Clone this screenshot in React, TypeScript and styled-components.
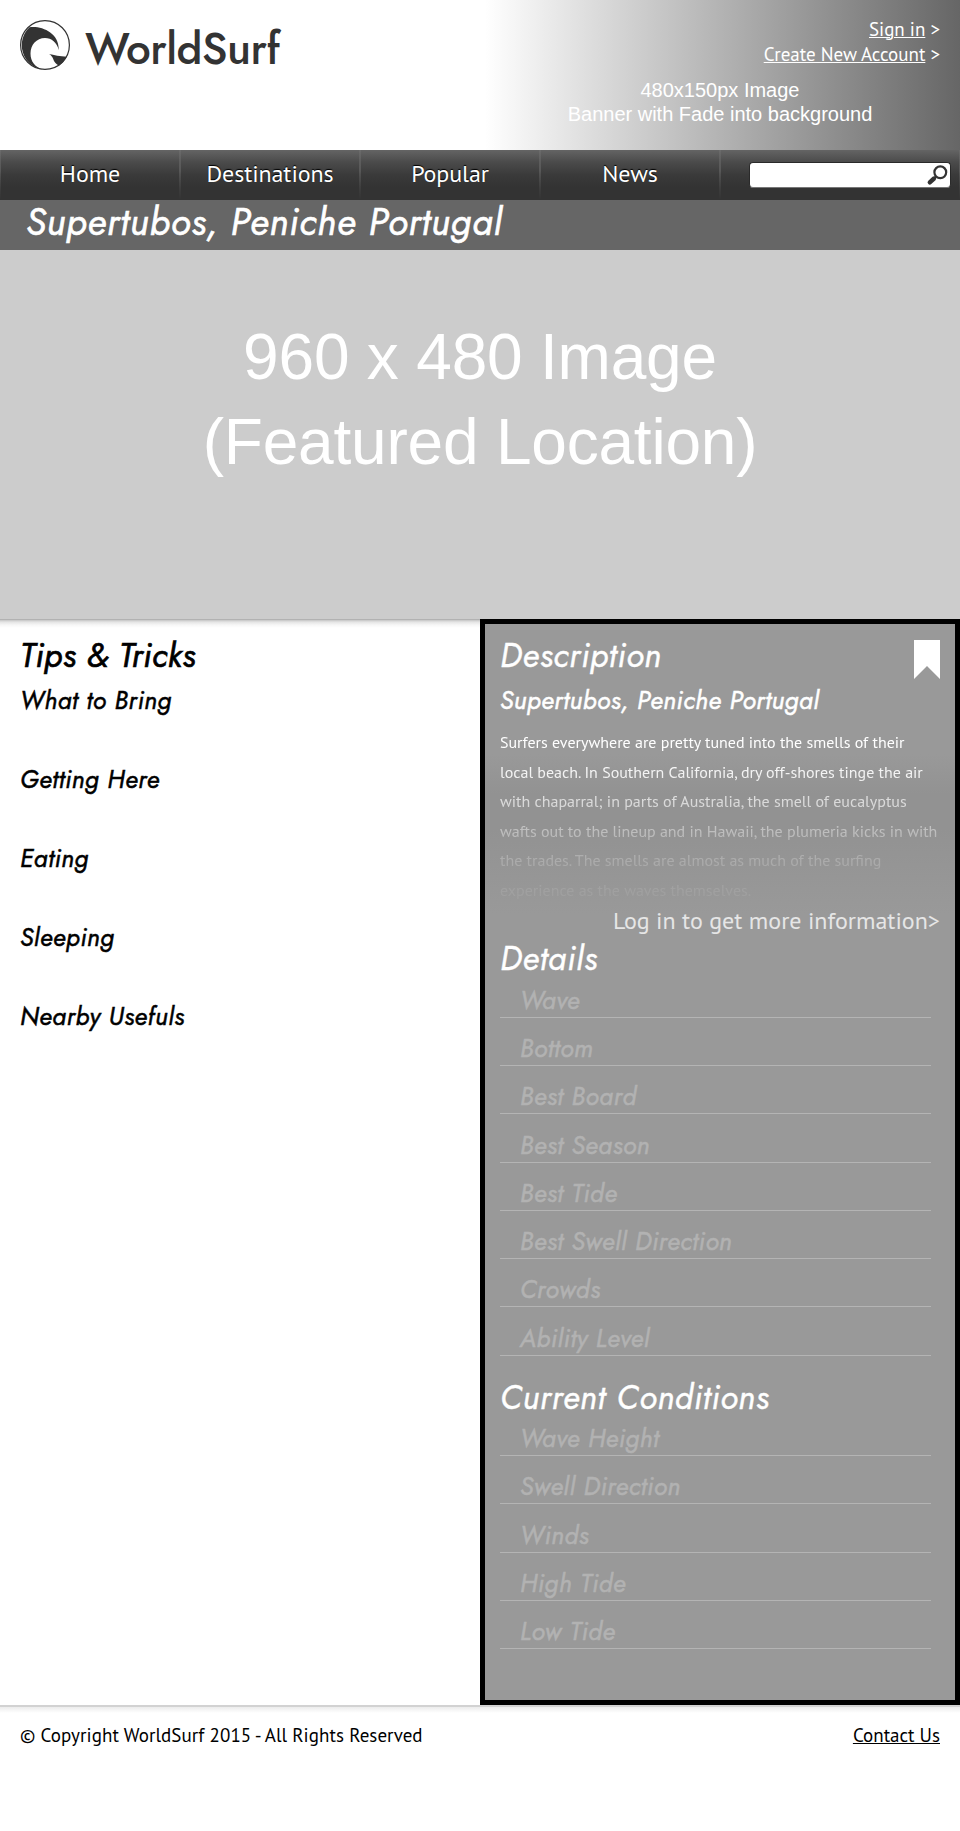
import React from "react";
import styled, { createGlobalStyle } from "styled-components";

const geometric = `Jost, Lato, "Liberation Sans", sans-serif`;
const humanist = `"PT Sans", "Noto Sans", sans-serif`;
const grotesque = `"Liberation Sans", Arial, sans-serif`;

const GlobalStyle = createGlobalStyle`
  *, *::before, *::after { box-sizing: border-box; }
  body { margin: 0; background: #fff; color: #000; font-family: ${humanist}; }
  h1, h2, h3, p { margin: 0; font-weight: 400; }
`;

const Page = styled.div`
  width: 960px;
  height: 1831px;
  background: #fff;
  overflow: hidden;
`;

const Header = styled.header`
  display: flex;
  height: 150px;
`;

const Brand = styled.a`
  display: flex;
  width: 480px;
  padding: 20px 0 0 20px;
  color: #333;
`;

const BrandName = styled.span`
  margin: -2px 0 0 15px;
  font: 500 44px/62px ${geometric};
  letter-spacing: -0.45px;
`;

const Banner = styled.div`
  width: 480px;
  padding-top: 17px;
  background: linear-gradient(90deg, #fff 1%, #666 100%);
  color: #fff;
`;

const AccountLinks = styled.div`
  padding-right: 20px;
  text-align: right;
  font: 19px/25px ${humanist};
`;

const Link = styled.a`
  color: inherit;
  letter-spacing: 0;
  text-decoration: underline;
  text-decoration-thickness: 1px;
  text-underline-offset: 1px;
`;

const BannerCaption = styled.p`
  margin-top: 11px;
  text-align: center;
  font: 20px/24px ${grotesque};
`;

const Nav = styled.nav`
  display: flex;
  height: 50px;
  background: linear-gradient(#646464, #4b4b4b 24%, #3a3a3a 50%, #333 75%);
`;

const NavCell = styled.div<{ $wide?: boolean }>`
  width: ${p => (p.$wide ? 240 : 180)}px;
  height: 50px;
  background:
    linear-gradient(rgba(255, 255, 255, 0.05), rgba(255, 255, 255, 0.13) 40%, transparent) left / 1px 100% no-repeat,
    linear-gradient(rgba(255, 255, 255, 0.05), rgba(255, 255, 255, 0.13) 40%, transparent) right / 1px 100% no-repeat;
  color: #fff;
  text-align: center;
  font: 24px/48px ${humanist};
  letter-spacing: -0.1px;
  text-shadow: 0 -1px 1px #000;
`;

const SearchBox = styled.div`
  display: flex;
  justify-content: flex-end;
  width: 202px;
  height: 26px;
  margin: 12px 0 0 29px;
  padding: 1px 0 0;
  border: 1px solid #2a2a2a;
  border-bottom-color: #777;
  border-radius: 4px;
  background: #fff;
`;

const TitleBar = styled.h1`
  height: 50px;
  padding-left: 26px;
  background: #666;
  color: #fff;
  font: italic 400 37px/45px ${geometric};
  letter-spacing: 0.88px;
  -webkit-text-stroke: 0.6px currentColor;
`;

const Hero = styled.div`
  height: 369px;
  padding-top: 65px;
  background: #ccc;
  color: #fff;
  text-align: center;
  font: 64px/85px ${grotesque};
  letter-spacing: -0.2px;
`;

const Columns = styled.main`
  display: flex;
  height: 1086px;
`;

const Tips = styled.section`
  width: 480px;
  padding: 17px 0 0 20px;
  background: linear-gradient(#b2b2b2 0 1px, #c4c4c4 1px, #e4e4e4 3px, #f7f7f7 6px, #fff 9px);
`;

const Heading = styled.h2<{ $strong?: boolean }>`
  font: italic 400 33px/40px ${geometric};
  letter-spacing: ${p => (p.$strong ? 0.45 : 0.68)}px;
  -webkit-text-stroke: ${p => (p.$strong ? 0.7 : 0.4)}px currentColor;
`;

const SubHeading = styled.h3`
  font: italic 400 25px/30px ${geometric};
  letter-spacing: 0.5px;
  -webkit-text-stroke: 0.5px currentColor;
`;

const TipList = styled.div`
  display: grid;
  grid-auto-rows: 79px;
  margin-top: 9px;
`;

const Panel = styled.section`
  width: 480px;
  padding: 12px 15px 0;
  border: 5px solid #000;
  background: linear-gradient(#999 130px, #929292 170px, #929292 205px, #999 290px);
  color: #fff;
`;

const PanelTop = styled.div`
  display: flex;
  justify-content: space-between;
  height: 40px;
`;

const Bookmark = styled.svg`
  display: block;
  margin-top: 4px;
`;

const Spot = styled(SubHeading)`
  margin-top: 9px;
`;

const Excerpt = styled.p`
  margin-top: 13px;
  font: 16px/29.6px ${humanist};
  mask-image: linear-gradient(#000 30px, rgba(0, 0, 0, 0.6) 82px, rgba(0, 0, 0, 0.33) 112px, rgba(0, 0, 0, 0.17) 142px, rgba(0, 0, 0, 0.04) 178px);
`;

const LoginPrompt = styled.p`
  color: #e6e6e6;
  text-align: right;
  font: 24px/30px ${humanist};
`;

const Facts = styled.section<{ $gap: number }>`
  margin-top: ${p => p.$gap}px;
`;

const Fact = styled.div`
  display: flex;
  align-items: flex-end;
  width: 431px;
  height: 48.3px;
  padding: 0 0 2px 20px;
  border-bottom: 1px solid #b4b4b4;
  color: #b2b2b2;
  font: italic 400 25px/30px ${geometric};
  letter-spacing: 0.48px;
  -webkit-text-stroke: 0.5px currentColor;

  &:first-of-type { height: 38.5px; }
`;

const Footer = styled.footer`
  display: flex;
  justify-content: space-between;
  height: 126px;
  padding: 17px 20px 0;
  background: linear-gradient(#d2d2d2 0 2px, #ececec 2px, #fff 8px);
  font: 19px/26px ${humanist};
  letter-spacing: 0.06px;
`;

const Logo = () => (
  <svg width="50" height="50" viewBox="0 0 50 50">
    <circle cx="25" cy="25" r="24.4" fill="none" stroke="#333" strokeWidth="1.2" />
    <path
      fill="#333"
      d="M9.5 7.2 C22 5.5 39.5 13 38.7 30 C37 22.5 31.5 18 25 18 C16.5 18 10.5 25 10.5 33.5 C10.5 41.5 15 47 22.5 49.5 A24.7 24.7 0 0 1 9.5 7.2Z"
    />
    <path fill="#333" d="M29 34 C34 35 40 36.5 46.8 36.7 A24.7 24.7 0 0 1 39 45.8 C36.5 44.5 34 42 33 38.5 C32 36.5 31 35 29 34Z" />
  </svg>
);

const Magnifier = () => (
  <svg width="24" height="22" viewBox="0 0 24 22">
    <circle cx="14.3" cy="8.3" r="5.9" fill="none" stroke="#333" strokeWidth="2.2" />
    <path d="M10 12.5 L8 14.5" stroke="#333" strokeWidth="2.2" />
    <path d="M8 14.5 L3.8 18.3" stroke="#333" strokeWidth="4.4" strokeLinecap="round" />
  </svg>
);

const navItems = ["Home", "Destinations", "Popular", "News"];
const tips = ["What to Bring", "Getting Here", "Eating", "Sleeping", "Nearby Usefuls"];
const details = ["Wave", "Bottom", "Best Board", "Best Season", "Best Tide", "Best Swell Direction", "Crowds", "Ability Level"];
const conditions = ["Wave Height", "Swell Direction", "Winds", "High Tide", "Low Tide"];

const FactList = ({ title, items, gap }: { title: string; items: string[]; gap: number }) => (
  <Facts $gap={gap}>
    <Heading>{title}</Heading>
    {items.map(item => (
      <Fact key={item}>{item}</Fact>
    ))}
  </Facts>
);

export default function App() {
  return (
    <Page>
      <GlobalStyle />
      <Header>
        <Brand>
          <Logo />
          <BrandName>WorldSurf</BrandName>
        </Brand>
        <Banner>
          <AccountLinks>
            <div><Link>Sign in</Link> &gt;</div>
            <div><Link>Create New Account</Link> &gt;</div>
          </AccountLinks>
          <BannerCaption>
            480x150px Image
            <br />
            Banner with Fade into background
          </BannerCaption>
        </Banner>
      </Header>
      <Nav>
        {navItems.map(item => (
          <NavCell key={item}>{item}</NavCell>
        ))}
        <NavCell $wide>
          <SearchBox>
            <Magnifier />
          </SearchBox>
        </NavCell>
      </Nav>
      <TitleBar>Supertubos, Peniche Portugal</TitleBar>
      <Hero>
        960 x 480 Image
        <br />
        (Featured Location)
      </Hero>
      <Columns>
        <Tips>
          <Heading $strong>Tips &amp; Tricks</Heading>
          <TipList>
            {tips.map(tip => (
              <SubHeading key={tip}>{tip}</SubHeading>
            ))}
          </TipList>
        </Tips>
        <Panel>
          <PanelTop>
            <Heading>Description</Heading>
            <Bookmark width="26" height="39" viewBox="0 0 26 39">
              <path d="M0 0H26V39L13 26L0 39Z" fill="#fff" />
            </Bookmark>
          </PanelTop>
          <Spot>Supertubos, Peniche Portugal</Spot>
          <Excerpt>
            Surfers everywhere are pretty tuned into the smells of their local beach. In Southern
            California, dry off-shores tinge the air with chaparral; in parts of Australia, the smell
            of eucalyptus wafts out to the lineup and in Hawaii, the plumeria kicks in with the
            trades. The smells are almost as much of the surfing experience as the waves themselves.
          </Excerpt>
          <LoginPrompt>Log in to get more information&gt;</LoginPrompt>
          <FactList title="Details" items={details} gap={3.6} />
          <FactList title="Current Conditions" items={conditions} gap={21.9} />
        </Panel>
      </Columns>
      <Footer>
        <span>© Copyright WorldSurf 2015 - All Rights Reserved</span>
        <Link>Contact Us</Link>
      </Footer>
    </Page>
  );
}
